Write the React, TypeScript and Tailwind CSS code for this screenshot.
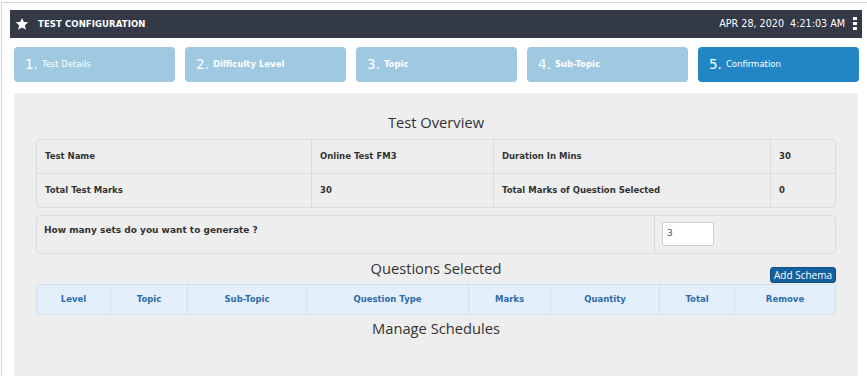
import React from 'react';

const SANS = "font-['DejaVu_Sans',sans-serif]";
const HEAD = "font-['Open_Sans','Noto_Sans',sans-serif]";

const steps = [
  { n: '1.', label: 'Test Details', bold: false, active: false },
  { n: '2.', label: 'Difficulty Level', bold: true, active: false },
  { n: '3.', label: 'Topic', bold: true, active: false },
  { n: '4.', label: 'Sub-Topic', bold: true, active: false },
  { n: '5.', label: 'Confirmation', bold: false, active: true },
];

const cols = [
  { name: 'Level', w: 'w-[74px]' },
  { name: 'Topic', w: 'w-[77px]' },
  { name: 'Sub-Topic', w: 'w-[119px]' },
  { name: 'Question Type', w: 'w-[162px]' },
  { name: 'Marks', w: 'w-[82px]' },
  { name: 'Quantity', w: 'w-[109px]' },
  { name: 'Total', w: 'w-[75px]' },
  { name: 'Remove', w: 'flex-1' },
];

const Star = () => (
  <svg width="14" height="14" viewBox="0 0 24 24" fill="#fff">
    <path d="M12 1.5l3.1 7.1 7.7.6-5.9 5.1 1.8 7.6L12 17.8l-6.7 4.1 1.8-7.6-5.9-5.1 7.7-.6z" />
  </svg>
);

const Dots = () => (
  <div className="flex flex-col gap-[2px]">
    <span className="block w-[4px] h-[3px] bg-white" />
    <span className="block w-[4px] h-[3px] bg-white" />
    <span className="block w-[4px] h-[3px] bg-white" />
  </div>
);

export default function App() {
  return (
    <div className={`w-[867px] h-[376px] overflow-hidden bg-white pt-[2px] pl-[1px] ${SANS}`}>
      <div className="h-full border-t border-l border-[#d5d5d5] pt-[7px] pl-[8px]">
        {/* header bar */}
        <div className="w-[852px] h-[28px] bg-[#333946] flex items-center justify-between pl-[5px] pr-[5px]">
          <div className="flex items-center gap-[9px]">
            <Star />
            <span className="text-white font-bold text-[8.5px] tracking-[0.1px]">TEST CONFIGURATION</span>
          </div>
          <div className="flex items-center gap-[8px]">
            <span className="text-white text-[9.6px] whitespace-pre">APR 28, 2020  4:21:03 AM</span>
            <Dots />
          </div>
        </div>

        {/* steps */}
        <div className="flex gap-[10px] mt-[9px] ml-[4px]">
          {steps.map((s) => (
            <div
              key={s.n}
              className={`w-[161px] h-[35px] rounded-[4px] flex items-center pl-[11px] gap-[4px] text-white ${
                s.active ? 'bg-[#2285c4]' : 'bg-[#9ec9e1]'
              }`}
            >
              <span className="text-[13.5px]">{s.n}</span>
              <span className={`text-[8.5px] ${s.bold ? 'font-bold' : ''}`}>{s.label}</span>
            </div>
          ))}
        </div>

        {/* body */}
        <div className="w-[844px] ml-[4px] mt-[11px] h-[300px] bg-[#eeeeee] rounded-t-[4px] pt-[17px] px-[22px]">
          <h2 className={`${HEAD} text-center text-[14.7px] leading-[24px] text-[#333]`}>Test Overview</h2>

          <div className="mt-[5px] border border-[#dcdcdc] rounded-[4px] text-[8.5px] font-bold text-[#333]">
            <div className="flex h-[34px] border-b border-[#dcdcdc]">
              <div className="w-[275px] px-[8px] flex items-center border-r border-[#dcdcdc]">Test Name</div>
              <div className="w-[182px] px-[8px] flex items-center border-r border-[#dcdcdc]">Online Test FM3</div>
              <div className="w-[277px] px-[8px] flex items-center border-r border-[#dcdcdc]">Duration In Mins</div>
              <div className="flex-1 px-[8px] flex items-center">30</div>
            </div>
            <div className="flex h-[33px]">
              <div className="w-[275px] px-[8px] flex items-center border-r border-[#dcdcdc]">Total Test Marks</div>
              <div className="w-[182px] px-[8px] flex items-center border-r border-[#dcdcdc]">30</div>
              <div className="w-[277px] px-[8px] flex items-center border-r border-[#dcdcdc]">Total Marks of Question Selected</div>
              <div className="flex-1 px-[8px] flex items-center">0</div>
            </div>
          </div>

          <div className="mt-[7px] h-[39px] border border-[#dcdcdc] rounded-[4px] flex text-[9px] font-bold text-[#333]">
            <div className="w-[618px] px-[7px] pt-[8px] border-r border-[#dcdcdc]">How many sets do you want to generate ?</div>
            <div className="flex-1 pl-[7px] pt-[6px]">
              <div className="w-[52px] h-[24px] bg-white border border-[#cfcfcf] rounded-[3px] flex items-center pl-[4px] text-[9px] font-normal text-[#555]">
                3
              </div>
            </div>
          </div>

          <div className="grid grid-cols-[1fr_auto_1fr] h-[30px]">
            <div />
            <h2 className={`${HEAD} text-center text-[14.7px] leading-[24px] pt-[2px] text-[#333]`}>Questions Selected</h2>
            <div className="flex items-end justify-end pb-[1px]">
              <button className="h-[16px] w-[66px] bg-[#15609e] border border-[#0f4f86] rounded-[3px] text-white text-[10px] leading-none font-['Open_Sans',sans-serif]">
                Add Schema
              </button>
            </div>
          </div>

          <div className="flex h-[31px] bg-[#e3effa] border border-[#d3e2ef] rounded-[2px] text-[8.5px] font-bold text-[#2e6ca7]">
            {cols.map((c, i) => (
              <div
                key={c.name}
                className={`${c.w} flex items-center justify-center ${i < cols.length - 1 ? 'border-r border-[#d3e2ef]' : ''}`}
              >
                {c.name}
              </div>
            ))}
          </div>

          <h2 className={`${HEAD} text-center text-[14.7px] leading-[24px] mt-[1px] text-[#333]`}>Manage Schedules</h2>
        </div>
      </div>
    </div>
  );
}
